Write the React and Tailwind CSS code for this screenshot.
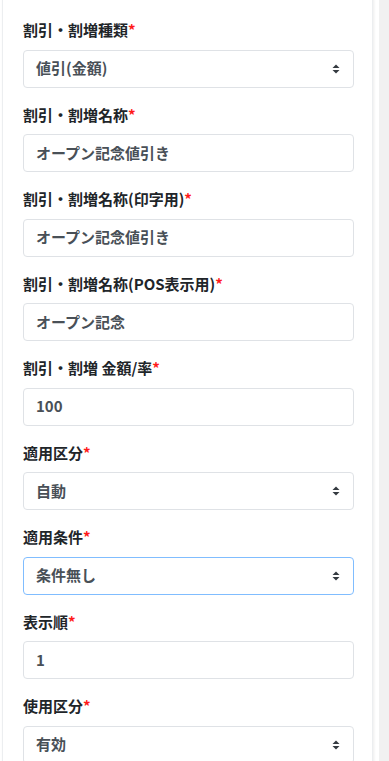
import React from 'react';

const fields = [
  { label: '割引・割増種類', value: '値引(金額)', type: 'select' },
  { label: '割引・割増名称', value: 'オープン記念値引き', type: 'input' },
  { label: '割引・割増名称(印字用)', value: 'オープン記念値引き', type: 'input' },
  { label: '割引・割増名称(POS表示用)', value: 'オープン記念', type: 'input' },
  { label: '割引・割増 金額/率', value: '100', type: 'input' },
  { label: '適用区分', value: '自動', type: 'select' },
  { label: '適用条件', value: '条件無し', type: 'select', focused: true },
  { label: '表示順', value: '1', type: 'input' },
  { label: '使用区分', value: '有効', type: 'select' },
];

function Arrows() {
  return (
    <svg width="8" height="12" viewBox="0 0 8 12" className="shrink-0">
      <path d="M4 1.5 L7.5 5 L0.5 5 Z" fill="#343a40" />
      <path d="M4 10.5 L7.5 7 L0.5 7 Z" fill="#343a40" />
    </svg>
  );
}

function Field({ label, value, type, focused }) {
  return (
    <div className="mb-4">
      <div className="mb-2 font-bold text-[#212529]">
        {label}
        <span className="text-[#ff1a1a]">*</span>
      </div>
      <div
        className={`flex h-[38px] items-center justify-between rounded border bg-white pl-3 pr-[13px] font-semibold text-[#495057] ${
          focused ? 'border-[#80bdff]' : 'border-[#dfe2e6]'
        }`}
      >
        <span>{value}</span>
        {type === 'select' && <Arrows />}
      </div>
    </div>
  );
}

export default function App() {
  return (
    <div
      className="flex h-[761px] overflow-hidden bg-white text-[15px] leading-normal"
      style={{ fontFamily: '"Noto Sans CJK JP", "Noto Sans", sans-serif' }}
    >
      <div className="ml-[2px] w-[371px] shrink-0 self-start -mt-[6px] rounded-md border border-[#eceef0] bg-white pl-5 pr-[18px] pt-[24px] shadow-[1px_0_3px_rgba(0,0,0,0.08)]">
        {fields.map((f) => (
          <Field key={f.label} {...f} />
        ))}
      </div>
      <div className="ml-auto w-[10px] bg-[#f1f1f1]" />
    </div>
  );
}
